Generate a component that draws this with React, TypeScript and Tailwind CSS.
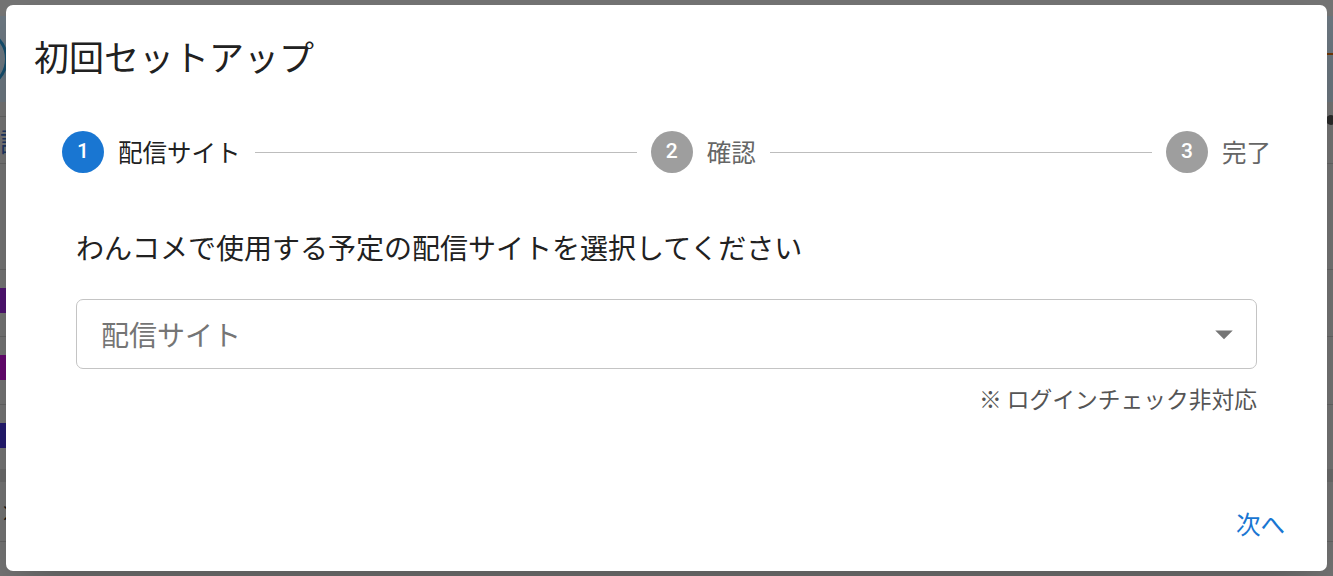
import React from "react";

const steps = ["配信サイト", "確認", "完了"];

function StepIcon({ n, active }: { n: number; active: boolean }) {
  return (
    <div
      className={`w-[42px] h-[42px] rounded-full flex items-center justify-center text-white text-[21px] font-medium font-[Roboto,sans-serif] ${
        active ? "bg-[#1976d2]" : "bg-[#9e9e9e]"
      }`}
    >
      {n}
    </div>
  );
}

function Stepper() {
  return (
    <div className="flex items-center px-[42px]">
      {steps.map((label, i) => (
        <React.Fragment key={label}>
          {i > 0 && <div className="flex-1 h-px bg-[#bdbdbd]" />}
          <div className="flex items-center px-[14px]">
            <StepIcon n={i + 1} active={i === 0} />
            <span
              className={`ml-[14px] text-[24.5px] leading-[36px] ${
                i === 0 ? "text-[#212121]" : "text-[#666666]"
              }`}
            >
              {label}
            </span>
          </div>
        </React.Fragment>
      ))}
    </div>
  );
}

function BackgroundPage() {
  return (
    <div className="flex flex-col w-full h-full bg-[#e8e8e8]">
      <div className="h-[16px]" />
      <div className="h-[86px] bg-[#d6ecff] flex items-center justify-between">
        <div className="w-[60px] h-[60px] rounded-full border-[3px] border-[#2a9ad8] -ml-[52px]" />
        <div className="h-[2px] w-[20px] bg-[#e07010] mb-[10px]" />
      </div>
      <div className="h-[14px]" />
      <div className="h-[48px] border-y border-[#c8c8c8] flex items-center justify-between">
        <span className="text-[26px] text-[#3b6dc4]">設</span>
        <div className="w-[10px] h-[10px] rounded-full bg-[#555] -mr-[3px] mt-[-40px]" />
      </div>
      <div className="h-[105px]" />
      <div className="h-[67px] border-t border-[#c8c8c8] pt-[18px]">
        <div className="h-[25px] w-[20px] bg-[#9c26e0]" />
      </div>
      <div className="h-[68px] border-t border-[#c8c8c8] pt-[18px]">
        <div className="h-[25px] w-[20px] bg-[#ca10de]" />
      </div>
      <div className="h-[65px] border-t border-[#c8c8c8] pt-[18px]">
        <div className="h-[25px] w-[20px] bg-[#4634dc]" />
      </div>
      <div className="h-[13px] bg-[#d4d4d4]" />
      <div className="h-[60px] border-b border-[#c8c8c8] flex items-center">
        <span className="text-[22px] text-[#222]">×</span>
      </div>
    </div>
  );
}

export default function App() {
  return (
    <div
      className="relative w-[1333px] h-[576px] overflow-hidden"
      style={{ fontFamily: '"Noto Sans CJK JP", "Noto Sans", sans-serif' }}
    >
      <BackgroundPage />
      <div className="absolute inset-0 bg-black/50" />
      <div className="absolute left-[6px] top-[5px] w-[1321px] h-[566px] bg-white rounded-[7px] shadow-2xl flex flex-col">
        <h2 className="pt-[23px] px-[28px] text-[35px] leading-[56px] text-[#212121] font-normal">
          初回セットアップ
        </h2>
        <div className="mt-[47px]">
          <Stepper />
        </div>
        <div className="px-[70px] mt-[53px]">
          <p className="text-[28px] leading-[42px] text-[#212121]">
            わんコメで使用する予定の配信サイトを選択してください
          </p>
          <div className="mt-[31px] h-[70px] border border-[#c4c4c4] rounded-[7px] flex items-center justify-between pl-[24px] pr-[11px]">
            <span className="text-[28px] text-[#757575]">配信サイト</span>
            <svg width="42" height="42" viewBox="0 0 24 24" fill="#757575">
              <path d="M7 10l5 5 5-5z" />
            </svg>
          </div>
          <p className="mt-[11px] text-right text-[22.75px] leading-[38px] text-[#555555]">
            ※ ログインチェック非対応
          </p>
        </div>
        <div className="mt-auto flex justify-end px-[42px] pb-[26px]">
          <button className="text-[24.5px] leading-[42px] text-[#1976d2]">次へ</button>
        </div>
      </div>
    </div>
  );
}
